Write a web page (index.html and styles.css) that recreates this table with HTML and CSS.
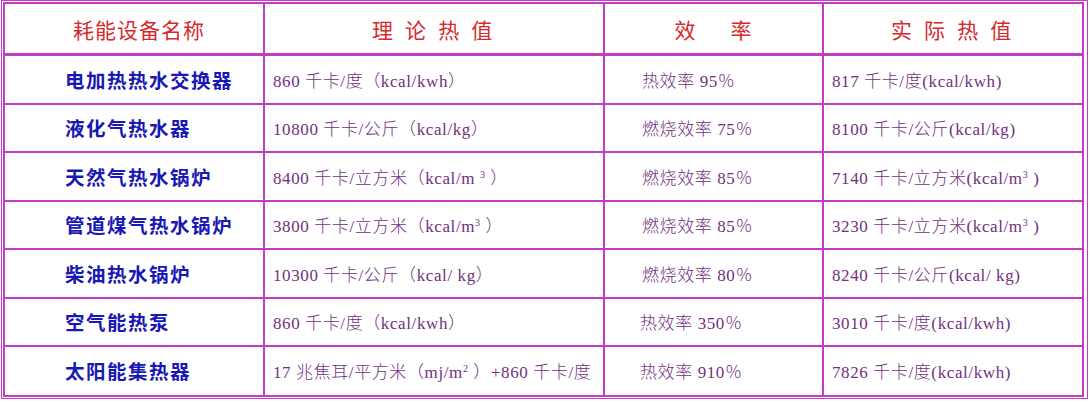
FILE: index.html
```html
<!DOCTYPE html>
<html lang="zh-CN">
<head>
<meta charset="utf-8">
<title>耗能设备热值对比</title>
<link rel="stylesheet" href="styles.css">
</head>
<body>
<div class="frame">
<table class="grid">
<colgroup>
<col class="c1"><col class="c2"><col class="c3"><col class="c4">
</colgroup>
<thead>
<tr class="head">
<th>耗能设备名称</th>
<th class="spaced">理 论 热 值</th>
<th>效&nbsp;&nbsp;&nbsp;&nbsp;&nbsp;&nbsp;率</th>
<th class="spaced">实 际 热 值</th>
</tr>
</thead>
<tbody>
<tr>
<td class="name">电加热热水交换器</td>
<td class="theo">860 千卡/度（kcal/kwh）</td>
<td class="eff">热效率 95％</td>
<td class="real">817 千卡/度(kcal/kwh)</td>
</tr>
<tr>
<td class="name">液化气热水器</td>
<td class="theo">10800 千卡/公斤（kcal/kg）</td>
<td class="eff">燃烧效率 75％</td>
<td class="real">8100 千卡/公斤(kcal/kg)</td>
</tr>
<tr>
<td class="name">天然气热水锅炉</td>
<td class="theo">8400 千卡/立方米（kcal/m&nbsp;<sup>3</sup>&nbsp;）</td>
<td class="eff">燃烧效率 85％</td>
<td class="real">7140 千卡/立方米(kcal/m<sup>3</sup>&nbsp;)</td>
</tr>
<tr>
<td class="name">管道煤气热水锅炉</td>
<td class="theo">3800 千卡/立方米（kcal/m<sup>3</sup>&nbsp;）</td>
<td class="eff">燃烧效率 85％</td>
<td class="real">3230 千卡/立方米(kcal/m<sup>3</sup>&nbsp;)</td>
</tr>
<tr>
<td class="name">柴油热水锅炉</td>
<td class="theo">10300 千卡/公斤（kcal/ kg）</td>
<td class="eff">燃烧效率 80％</td>
<td class="real">8240 千卡/公斤(kcal/ kg)</td>
</tr>
<tr>
<td class="name">空气能热泵</td>
<td class="theo">860 千卡/度（kcal/kwh）</td>
<td class="eff eff-b">热效率 350％</td>
<td class="real">3010 千卡/度(kcal/kwh)</td>
</tr>
<tr>
<td class="name">太阳能集热器</td>
<td class="theo">17 兆焦耳/平方米（mj/m<sup>2</sup>&nbsp;）+860 千卡/度</td>
<td class="eff eff-b">热效率 910％</td>
<td class="real">7826 千卡/度(kcal/kwh)</td>
</tr>
</tbody>
</table>
</div>
</body>
</html>
```
FILE: styles.css
```css
html, body {
  margin: 0;
  padding: 0;
  background: #ffffff;
}

.frame {
  margin: 0 0 0 1px;
  width: 1083px;
  border: 1px solid #c23cc6;
  padding: 1px;
}

.grid {
  border-collapse: separate;
  border-spacing: 0;
  table-layout: fixed;
  width: 1081px;
  border: 2px solid #c23cc6;
}

.c1 { width: 260px; }
.c2 { width: 340px; }
.c3 { width: 219px; }
.c4 { width: 258px; }

.grid th,
.grid td {
  box-sizing: border-box;
  padding: 0;
  border-right: 2px solid #c23cc6;
  border-bottom: 2px solid #c23cc6;
  white-space: nowrap;
  overflow: hidden;
}

.grid th:last-child,
.grid td:last-child {
  border-right: 0;
}

.grid tbody tr:last-child td {
  border-bottom: 0;
}

.head th {
  height: 52px;
  border-bottom: 3px solid #c23cc6;
  color: #d42a2e;
  font-family: "Noto Sans CJK SC", sans-serif;
  font-weight: 400;
  font-size: 21px;
  text-align: center;
  letter-spacing: 1px;
}

.head th:first-child {
  padding-left: 10px;
}

.head th.spaced {
  letter-spacing: 3.7px;
}

.grid tbody td {
  height: 48.5px;
}

.grid tbody tr:last-child td {
  height: 47.5px;
}

.name {
  padding-left: 60px !important;
  color: #1818b4;
  font-family: "Noto Sans CJK SC", sans-serif;
  font-weight: 700;
  font-size: 19.5px;
  letter-spacing: 1.5px;
}

.theo,
.eff,
.real {
  color: #72307e;
  font-family: "Liberation Serif", "Noto Sans CJK SC", serif;
  font-weight: 300;
  font-size: 17px;
  letter-spacing: 0.6px;
}

.theo { padding-left: 8px !important; }
.eff { padding-left: 37px !important; }
.eff-b { padding-left: 35px !important; }
.real { padding-left: 8px !important; }

sup {
  font-size: 10px;
  vertical-align: 6px;
  line-height: 0;
}
```
